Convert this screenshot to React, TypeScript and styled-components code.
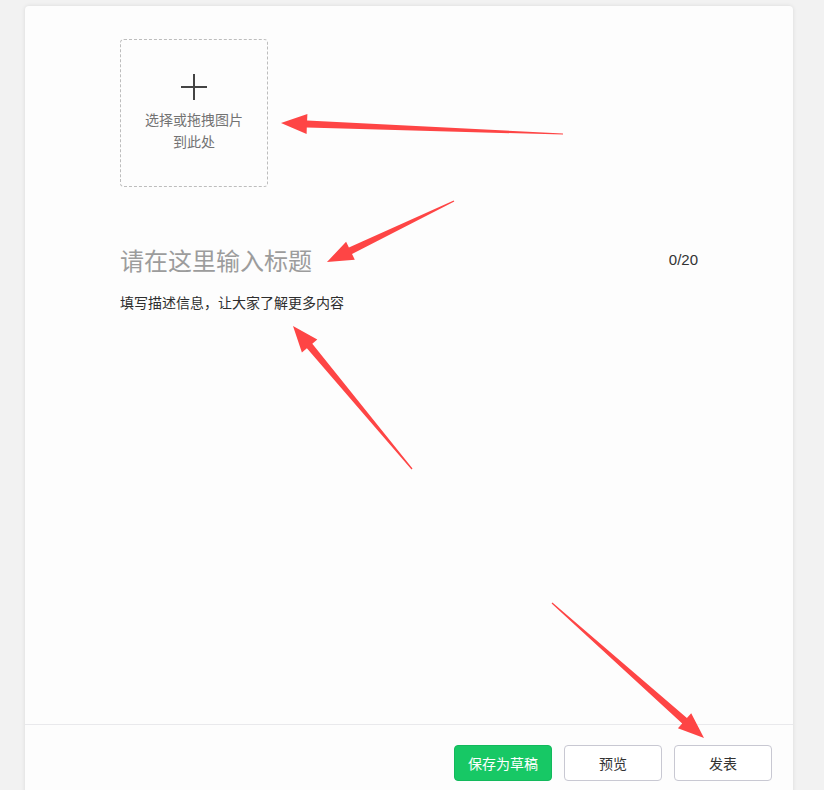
import styled, { createGlobalStyle } from "styled-components";

const GlobalStyle = createGlobalStyle`
  body {
    margin: 0;
    background: #f2f2f2;
    font-family: "Noto Sans CJK SC", "Noto Sans", sans-serif;
  }
`;

const Page = styled.div`
  position: relative;
  width: 824px;
  height: 790px;
  overflow: hidden;
  padding: 6px 0 0 25px;
  box-sizing: border-box;
`;

const Card = styled.div`
  width: 768px;
  height: 820px;
  background: #fdfdfd;
  border-radius: 4px;
  box-shadow: 0 0 4px rgba(0, 0, 0, 0.1);
  display: flex;
  flex-direction: column;
`;

const Content = styled.div`
  height: 718px;
  box-sizing: border-box;
  padding: 33px 95px 0;
  display: flex;
  flex-direction: column;
`;

const Upload = styled.div`
  width: 148px;
  height: 148px;
  box-sizing: border-box;
  border: 1px dashed #bdbdbd;
  border-radius: 4px;
  display: flex;
  flex-direction: column;
  align-items: center;
  padding-top: 34px;
  gap: 8px;
  cursor: pointer;
`;

const Plus = styled.div`
  position: relative;
  width: 26px;
  height: 26px;

  &::before,
  &::after {
    content: "";
    position: absolute;
    background: #444;
  }
  &::before {
    left: 12px;
    top: 0;
    width: 2px;
    height: 26px;
  }
  &::after {
    top: 12px;
    left: 0;
    width: 26px;
    height: 2px;
  }
`;

const UploadText = styled.div`
  font-size: 14px;
  line-height: 22px;
  color: #737373;
  text-align: center;
`;

const TitleRow = styled.div`
  margin-top: 52px;
  height: 40px;
  display: flex;
  align-items: center;
  justify-content: space-between;
`;

const TitleInput = styled.input`
  flex: 1;
  border: none;
  outline: none;
  background: transparent;
  padding: 0;
  font-family: inherit;
  font-size: 24px;
  color: #333;

  &::placeholder {
    color: #9c9c9c;
  }
`;

const Counter = styled.span`
  font-family: "Liberation Sans", Arial, sans-serif;
  font-size: 15px;
  color: #333;
`;

const Desc = styled.textarea`
  margin-top: 13px;
  height: 200px;
  border: none;
  outline: none;
  resize: none;
  background: transparent;
  padding: 0;
  font-family: inherit;
  font-size: 14px;
  line-height: 20px;
  color: #333;

  &::placeholder {
    color: #2e2e2e;
  }
`;

const Footer = styled.div`
  border-top: 1px solid #e9e9ec;
  display: flex;
  justify-content: flex-end;
  gap: 12px;
  padding: 20px 21px 0 0;
`;

const Button = styled.button<{ $primary?: boolean }>`
  width: 98px;
  height: 36px;
  border-radius: 4px;
  font-family: inherit;
  font-size: 14px;
  cursor: pointer;
  border: 1px solid ${(p) => (p.$primary ? "#12b95c" : "#c8c8d2")};
  background: ${(p) => (p.$primary ? "#17c865" : "#fff")};
  color: ${(p) => (p.$primary ? "#fff" : "#333")};
`;

const Overlay = styled.svg`
  position: absolute;
  left: 0;
  top: 0;
  pointer-events: none;
`;

type Pt = [number, number];

// tapered annotation arrow, tail -> tip
const arrowPoints = (tail: Pt, tip: Pt, len: number, half: number, w1: number, w0: number) => {
  const dx = tip[0] - tail[0];
  const dy = tip[1] - tail[1];
  const d = Math.hypot(dx, dy);
  const ux = dx / d;
  const uy = dy / d;
  const nx = -uy;
  const ny = ux;
  const bx = tip[0] - ux * len;
  const by = tip[1] - uy * len;
  const pts: Pt[] = [
    [tail[0] + (nx * w0) / 2, tail[1] + (ny * w0) / 2],
    [bx + (nx * w1) / 2, by + (ny * w1) / 2],
    [bx + nx * half, by + ny * half],
    tip,
    [bx - nx * half, by - ny * half],
    [bx - (nx * w1) / 2, by - (ny * w1) / 2],
    [tail[0] - (nx * w0) / 2, tail[1] - (ny * w0) / 2],
  ];
  return pts.map((p) => p.map((v) => v.toFixed(1)).join(",")).join(" ");
};

const arrows: { tail: Pt; tip: Pt }[] = [
  { tail: [563, 134], tip: [281, 123] },
  { tail: [454, 201], tip: [327, 262] },
  { tail: [412, 469], tip: [293, 326] },
  { tail: [552, 603], tip: [704, 738] },
];

const App = () => {
  return (
    <>
      <GlobalStyle />
      <Page>
        <Card>
          <Content>
            <Upload>
              <Plus />
              <UploadText>
                选择或拖拽图片
                <br />
                到此处
              </UploadText>
            </Upload>
            <TitleRow>
              <TitleInput placeholder="请在这里输入标题" maxLength={20} />
              <Counter>0/20</Counter>
            </TitleRow>
            <Desc placeholder="填写描述信息，让大家了解更多内容" />
          </Content>
          <Footer>
            <Button $primary>保存为草稿</Button>
            <Button>预览</Button>
            <Button>发表</Button>
          </Footer>
        </Card>
        <Overlay width="824" height="790">
          {arrows.map((a, i) => (
            <polygon key={i} points={arrowPoints(a.tail, a.tip, 26, 10, 7, 1.2)} fill="#fe4545" />
          ))}
        </Overlay>
      </Page>
    </>
  );
};

export default App;
